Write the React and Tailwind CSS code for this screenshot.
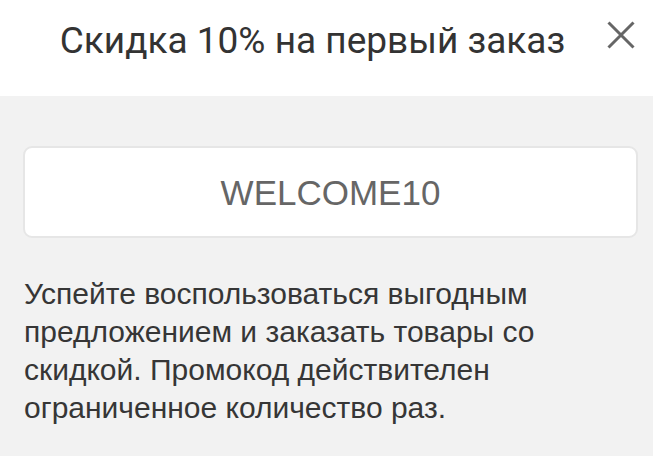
export default function App() {
  return (
    <div className="w-[653px] h-[456px] overflow-hidden bg-[#f2f2f2]">
      {/* Header */}
      <div className="h-[96px] bg-white flex items-center relative">
        <h1
          className="w-full pr-[28px] text-center text-[37px] text-[#333333] leading-none pb-[16px]"
          style={{ fontFamily: 'Roboto, sans-serif' }}
        >
          Скидка 10% на первый заказ
        </h1>
        <button type="button" className="absolute right-[18px] top-[21px] w-[28px] h-[28px]">
          <svg width="28" height="28" viewBox="0 0 28 28" fill="none">
            <path d="M1.5 1.5L26.5 26.5M26.5 1.5L1.5 26.5" stroke="#666666" strokeWidth="3" />
          </svg>
        </button>
      </div>

      {/* Body */}
      <div className="pl-[23px] pr-[15px] pt-[50px]" style={{ fontFamily: '"Liberation Sans", Arial, sans-serif' }}>
        <div className="h-[92px] bg-white border-2 border-[#e6e6e6] rounded-[9px] flex items-center justify-center">
          <span className="text-[35px] text-[#666666] leading-none">WELCOME10</span>
        </div>
        <p className="mt-[37px] pl-px text-[30px] leading-[38px] text-[#363636]">
          Успейте воспользоваться выгодным предложением и заказать товары со скидкой. Промокод действителен ограниченное количество раз.
        </p>
      </div>
    </div>
  );
}
